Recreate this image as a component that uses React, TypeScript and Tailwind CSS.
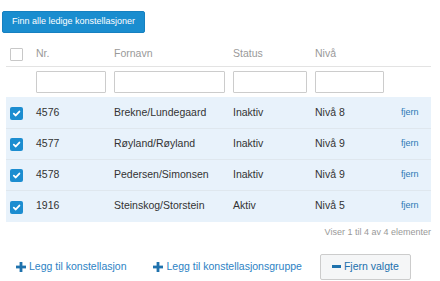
import React from "react";

const rows = [
  { nr: "4576", navn: "Brekne/Lundegaard", status: "Inaktiv", niva: "Nivå 8" },
  { nr: "4577", navn: "Røyland/Røyland", status: "Inaktiv", niva: "Nivå 9" },
  { nr: "4578", navn: "Pedersen/Simonsen", status: "Inaktiv", niva: "Nivå 9" },
  { nr: "1916", navn: "Steinskog/Storstein", status: "Aktiv", niva: "Nivå 5" },
];

function Check() {
  return (
    <div className="w-[13px] h-[13px] rounded-[2px] bg-[#1c8dd0] flex items-center justify-center">
      <svg width="9" height="9" viewBox="0 0 10 10">
        <path d="M2 5.2 L4.2 7.2 L8.2 2.8" stroke="white" strokeWidth="2" fill="none" strokeLinecap="round" strokeLinejoin="round" />
      </svg>
    </div>
  );
}

function Plus() {
  return (
    <svg width="10" height="10" viewBox="0 0 10 10" className="shrink-0">
      <rect x="3.6" y="0" width="2.8" height="10" fill="#1f72ad" />
      <rect x="0" y="3.6" width="10" height="2.8" fill="#1f72ad" />
    </svg>
  );
}

export default function App() {
  return (
    <div className="w-[440px] h-[281px] bg-white font-['Liberation_Sans',Arial,sans-serif] overflow-hidden">
      <div className="pt-[7px] pl-[2px]">
        <button className="h-[22px] px-[9px] bg-[#1a8dcf] text-white text-[9px] rounded-[2px] border border-[#1680c0] leading-none">
          Finn alle ledige konstellasjoner
        </button>
      </div>

      <div className="ml-[6px] w-[425px] mt-[10px]">
        {/* header */}
        <div className="flex items-center h-[24px] border-b border-[#e3e3e3] text-[10.5px] text-[#999]">
          <div className="w-[30px] pl-[4px]">
            <div className="w-[13px] h-[13px] border border-[#c8c8c8] rounded-[1px] bg-white" />
          </div>
          <div className="w-[78px]">Nr.</div>
          <div className="w-[119px]">Fornavn</div>
          <div className="w-[82px]">Status</div>
          <div className="w-[80px]">Nivå</div>
        </div>
        {/* filter */}
        <div className="flex items-center h-[30px]">
          <div className="w-[30px]" />
          <div className="w-[78px]">
            <div className="w-[70px] h-[22px] border border-[#cccccc] rounded-[1px]" />
          </div>
          <div className="w-[119px]">
            <div className="w-[111px] h-[22px] border border-[#cccccc] rounded-[1px]" />
          </div>
          <div className="w-[82px]">
            <div className="w-[74px] h-[22px] border border-[#cccccc] rounded-[1px]" />
          </div>
          <div className="w-[80px]">
            <div className="w-[69px] h-[22px] border border-[#cccccc] rounded-[1px]" />
          </div>
        </div>
        {/* rows */}
        <div className="bg-[#e8f2fb] pt-[1px]">
          {rows.map((r, i) => (
            <div
              key={r.nr}
              className={
                "flex items-center h-[31px] text-[10.5px] text-[#333] " +
                (i < rows.length - 1 ? "border-b border-[#dfe7ee]" : "")
              }
            >
              <div className="w-[30px] pl-[4px] pt-[2px]">
                <Check />
              </div>
              <div className="w-[78px]">{r.nr}</div>
              <div className="w-[119px]">{r.navn}</div>
              <div className="w-[82px]">{r.status}</div>
              <div className="w-[86px]">{r.niva}</div>
              <div className="text-[9px] text-[#2a78b5]">fjern</div>
            </div>
          ))}
        </div>
        <div className="mt-[4px] h-[12px] leading-[12px] text-right text-[9px] text-[#999]">
          Viser 1 til 4 av 4 elementer
        </div>
      </div>

      <div className="flex items-center mt-[16px] h-[26px] text-[10.5px] text-[#2c82c4]">
        <div className="ml-[16px] flex items-center gap-[3px]">
          <Plus />
          <span>Legg til konstellasjon</span>
        </div>
        <div className="ml-[27px] flex items-center gap-[3px]">
          <Plus />
          <span>Legg til konstellasjonsgruppe</span>
        </div>
        <button className="ml-[18px] h-[26px] px-[11px] flex items-center gap-[3px] bg-[#f5f6f7] border border-[#cccccc] rounded-[2px] text-[#2170ad]">
          <span className="block w-[9px] h-[3px] bg-[#1f72ad]" />
          <span>Fjern valgte</span>
        </button>
      </div>
    </div>
  );
}
